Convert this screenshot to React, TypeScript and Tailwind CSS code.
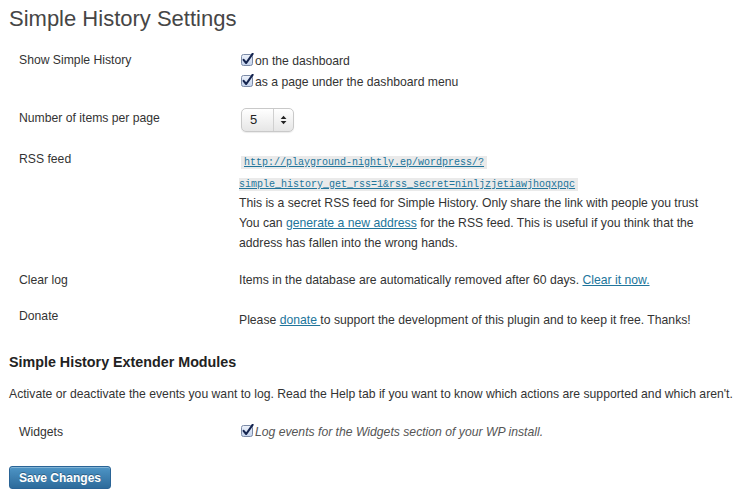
import React from 'react';

const Check = () => (
  <svg width="13" height="13" viewBox="0 0 13 13" className="inline-block align-[-1px] ml-[2px] mr-[1px]">
    <defs>
      <linearGradient id="cbg" x1="0" y1="0" x2="0" y2="1">
        <stop offset="0" stopColor="#eef3fb" />
        <stop offset="1" stopColor="#c3d2ec" />
      </linearGradient>
    </defs>
    <rect x="0.5" y="1.5" width="11" height="11" rx="2" fill="url(#cbg)" stroke="#7b8aa6" />
    <path d="M2.6 6.8 L5.2 10 L11.6 0.8" fill="none" stroke="#15244f" strokeWidth="2.1" strokeLinecap="round" strokeLinejoin="round" />
  </svg>
);

const Row = ({ label, className, children }: { label: string; className?: string; children: React.ReactNode }) => (
  <div className={`flex ${className ?? ''}`}>
    <div className="w-[230px] shrink-0 pl-[10px] leading-[20px]">{label}</div>
    <div className="flex-1 whitespace-nowrap">{children}</div>
  </div>
);

const A = ({ children }: { children: React.ReactNode }) => (
  <a href="#" className="text-[#21759b] underline">{children}</a>
);

export default function App() {
  return (
    <div className="min-h-screen bg-white px-[9px] pt-[4px] text-[12.2px] text-[#333] font-['Liberation_Sans',Arial,sans-serif]">
      <h1 className="text-[22px] leading-[29px] text-[#464646] font-normal">Simple History Settings</h1>

      <Row label="Show Simple History" className="mt-[17px]">
        <div className="pt-[1px] leading-[21px]">
          <div><Check />on the dashboard</div>
          <div><Check />as a page under the dashboard menu</div>
        </div>
      </Row>

      <Row label="Number of items per page" className="mt-[15px]">
        <div className="ml-[2px] flex h-[24px] w-[53px] items-center rounded-[5px] border border-[#c9c9c9] bg-gradient-to-b from-white to-[#e6e6e6] shadow-[0_1px_1px_rgba(0,0,0,0.08)]">
          <span className="w-[32px] pl-[8px] text-[13px] leading-[20px] text-[#222]">5</span>
          <span className="h-full w-px bg-[#d0d0d0]" />
          <svg width="20" height="12" viewBox="0 0 20 12">
            <path d="M7 5 L10 1.5 L13 5 Z" fill="#222" />
            <path d="M7 7 L10 10.5 L13 7 Z" fill="#222" />
          </svg>
        </div>
      </Row>

      <Row label="RSS feed" className="mt-[17px]">
        <div className="pt-[1px]">
          <div className="h-[22px] leading-[22px]">
            <code className="ml-[2px] bg-[#eaeaea] px-[3px] py-[1px] text-[10px] font-['Liberation_Mono',monospace]">
              <A>http://playground-nightly.ep/wordpress/?</A>
            </code>
          </div>
          <div className="h-[22px] leading-[22px]">
            <code className="bg-[#eaeaea] pr-[3px] py-[1px] text-[10px] font-['Liberation_Mono',monospace]">
              <A>simple_history_get_rss=1&amp;rss_secret=ninljzjetiawjhoqxpqc</A>
            </code>
          </div>
          <div className="-mt-[1px] leading-[20px]">
            This is a secret RSS feed for Simple History. Only share the link with people you trust
            <br />
            You can <A>generate a new address</A> for the RSS feed. This is useful if you think that the
            <br />
            address has fallen into the wrong hands.
          </div>
        </div>
      </Row>

      <Row label="Clear log" className="mt-[17px]">
        <div className="leading-[20px]">
          Items in the database are automatically removed after 60 days. <A>Clear it now.</A>
        </div>
      </Row>

      <Row label="Donate" className="mt-[16px]">
        <div className="pt-[4px] leading-[20px]">
          Please <A>donate </A>to support the development of this plugin and to keep it free. Thanks!
        </div>
      </Row>

      <h3 className="mt-[22px] text-[14.3px] leading-[20px] font-bold text-[#222]">Simple History Extender Modules</h3>
      <p className="mt-[12px] whitespace-nowrap leading-[20px]">
        Activate or deactivate the events you want to log. Read the Help tab if you want to know which actions are supported and which aren't.
      </p>

      <Row label="Widgets" className="mt-[18px]">
        <div className="leading-[20px] italic text-[#555]">
          <Check />Log events for the Widgets section of your WP install.
        </div>
      </Row>

      <button className="mt-[24px] h-[23px] rounded-[3px] border border-[#2a6496] bg-gradient-to-b from-[#4e95c6] to-[#2d6b9b] px-[9px] text-[12px] font-bold leading-[20px] text-white [text-shadow:0_-1px_0_rgba(0,0,0,0.3)] shadow-[inset_0_1px_0_rgba(255,255,255,0.3)]">
        Save Changes
      </button>
    </div>
  );
}
